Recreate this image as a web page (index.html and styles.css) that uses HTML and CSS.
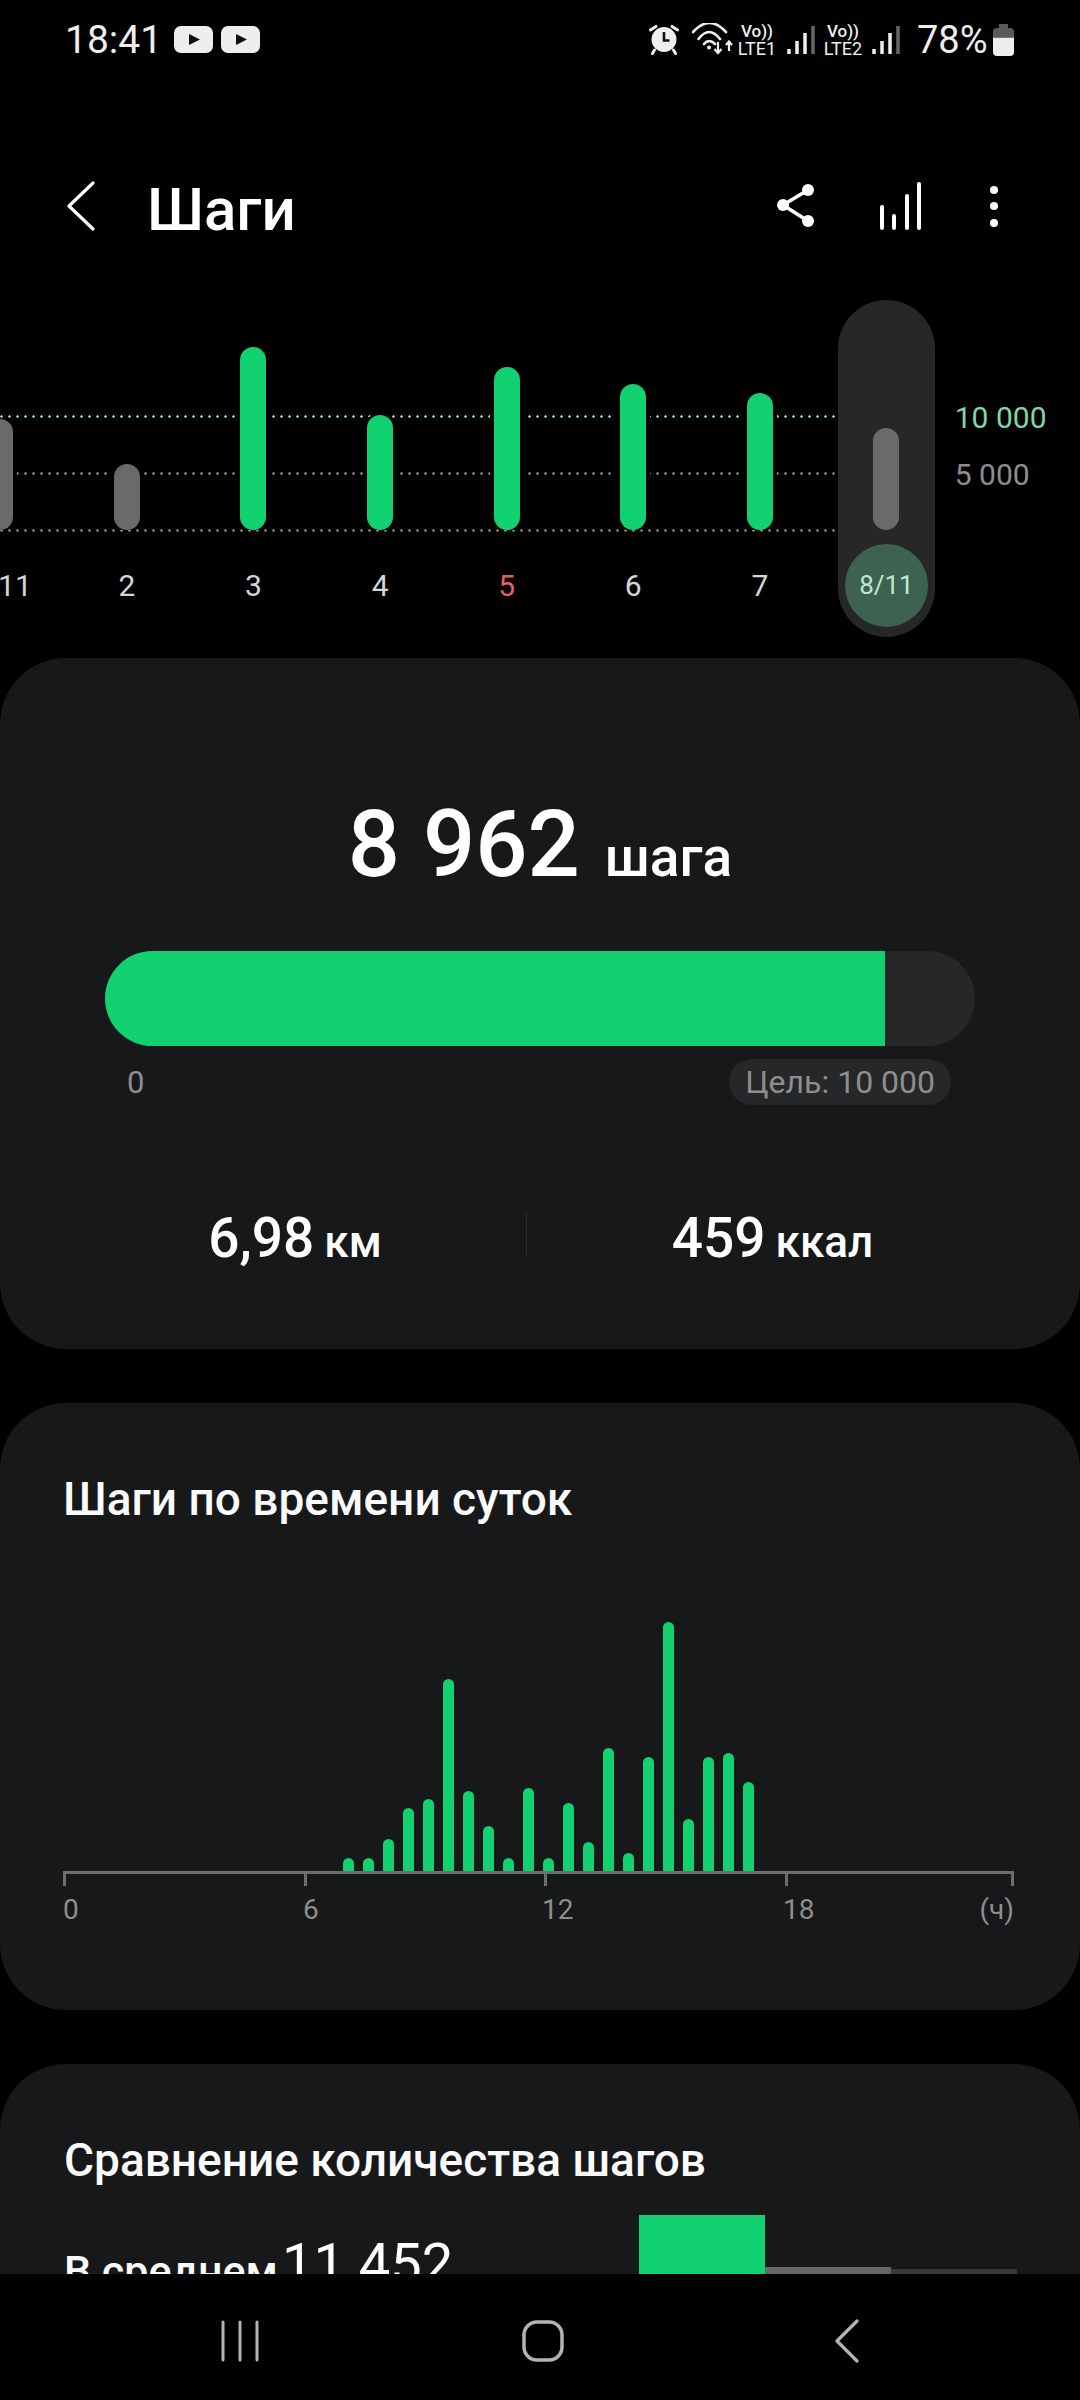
FILE: index.html
```html
<!DOCTYPE html>
<html lang="ru">
<head>
<meta charset="utf-8">
<title>Шаги</title>
<link rel="stylesheet" href="styles.css">
</head>
<body>
<div class="screen">
  <div class="status">
    <span class="time">18:41</span>
    <svg class="yt yt-first" viewBox="0 0 39 27"><rect width="39" height="27" rx="7" fill="#eee"/><path d="M15 8 26 13.5 15 19z" fill="#111"/></svg>
    <svg class="yt yt-second" viewBox="0 0 39 27"><rect width="39" height="27" rx="7" fill="#eee"/><path d="M15 8 26 13.5 15 19z" fill="#111"/></svg>
    <svg class="alarm" viewBox="0 0 32 30"><circle cx="16" cy="14.5" r="12.5" fill="#eee"/><path d="M2.5 5 8 1.5M29.5 5 24 1.5M6.500 25 4.500 28.500M25.500 25 27.500 28.500" stroke="#eee" stroke-width="3" stroke-linecap="round"/><path d="M16 7V15.500H21.500" fill="none" stroke="#111" stroke-width="2.600"/></svg>
    <svg class="wifi" viewBox="0 0 44 32"><path d="M1 9Q17.500-9 34 9M6.500 16Q17 2 28 16M12 21Q17 15 23 21" fill="none" stroke="#eee" stroke-width="2.600" stroke-linecap="round"/><circle cx="17" cy="24.500" r="2" fill="#eee"/><path d="M26 19V29M22.500 26 26 30 29.500 26M37 28V19M34 22 37 18.500 40 22" fill="none" stroke="#eee" stroke-width="2.200"/></svg>
    <div class="volte"><span class="vo">Vo))</span><span class="lte">LTE1</span></div>
    <svg class="signal" viewBox="0 0 28 30"><path d="M2 24V29M10 16V29M18 8V29" stroke="#eee" stroke-width="3.500"/><path d="M26 1V29" stroke="#666" stroke-width="3.500"/></svg>
    <div class="volte volte-two"><span class="vo">Vo))</span><span class="lte">LTE2</span></div>
    <svg class="signal signal-two" viewBox="0 0 28 30"><path d="M2 24V29M10 16V29M18 8V29" stroke="#eee" stroke-width="3.500"/><path d="M26 1V29" stroke="#666" stroke-width="3.500"/></svg>
    <span class="percent">78%</span>
    <svg class="battery" viewBox="0 0 21 32"><path d="M0 13V8A4 4 0 0 1 4 4H6V0H15V4H17A4 4 0 0 1 21 8V13z" fill="#5a5a5a"/><path d="M0 13.500H21V28A4 4 0 0 1 17 32H4A4 4 0 0 1 0 28z" fill="#eee"/></svg>
  </div>

  <div class="appbar">
    <svg class="back" viewBox="0 0 28 50"><path d="M26 2 2 25 26 48" fill="none" stroke="#fff" stroke-width="3.200" stroke-linecap="round" stroke-linejoin="round"/></svg>
    <h1 class="title">Шаги</h1>
    <svg class="share" viewBox="0 0 40 50"><path d="M32 9 7 24 32 40" fill="none" stroke="#fff" stroke-width="3.600"/><circle cx="32" cy="9" r="6" fill="#fff"/><circle cx="7" cy="24" r="6" fill="#fff"/><circle cx="32" cy="40" r="6" fill="#fff"/></svg>
    <svg class="bars-icon" viewBox="0 0 42 50"><path d="M2 26V47M14 35V47M27 15V47M39 3V47" stroke="#fff" stroke-width="4" stroke-linecap="round"/></svg>
    <svg class="kebab" viewBox="0 0 12 50"><circle cx="6" cy="9" r="4" fill="#fff"/><circle cx="6" cy="25" r="4" fill="#fff"/><circle cx="6" cy="42" r="4" fill="#fff"/></svg>
  </div>

  <div class="week">
    <div class="dots dots-goal"></div>
    <div class="dots dots-mid"></div>
    <div class="dots dots-base"></div>
    <div class="day"><div class="plot"><div class="bar bar-off" style="height:111px"></div></div><span class="day-label">1/11</span></div>
    <div class="day"><div class="plot"><div class="bar bar-off" style="height:66px"></div></div><span class="day-label">2</span></div>
    <div class="day"><div class="plot"><div class="bar" style="height:183px"></div></div><span class="day-label">3</span></div>
    <div class="day"><div class="plot"><div class="bar" style="height:115px"></div></div><span class="day-label">4</span></div>
    <div class="day"><div class="plot"><div class="bar" style="height:163px"></div></div><span class="day-label day-red">5</span></div>
    <div class="day"><div class="plot"><div class="bar" style="height:146px"></div></div><span class="day-label">6</span></div>
    <div class="day"><div class="plot"><div class="bar" style="height:137px"></div></div><span class="day-label">7</span></div>
    <div class="day day-selected"><div class="plot"><div class="bar bar-off" style="height:102px"></div></div><span class="day-circle">8/11</span></div>
    <div class="scale"><span class="scale-goal">10 000</span><span class="scale-mid">5 000</span></div>
  </div>

  <div class="main">
    <section class="card card-total">
      <div class="total"><span class="total-num">8 962</span> <span class="total-unit">шага</span></div>
      <div class="progress"><div class="progress-fill" style="width:89.650%"></div></div>
      <div class="legend"><span class="legend-zero">0</span><span class="legend-chip">Цель: 10 000</span></div>
      <div class="stats">
        <div class="stat"><span class="stat-num">6,98</span> <span class="stat-unit">км</span></div>
        <div class="stat-divider"></div>
        <div class="stat"><span class="stat-num">459</span> <span class="stat-unit">ккал</span></div>
      </div>
    </section>

    <section class="card card-hours">
      <h2 class="card-title">Шаги по времени суток</h2>
      <div class="hours">
        <div class="hour" style="height:13px"></div><div class="hour" style="height:13px"></div><div class="hour" style="height:32px"></div><div class="hour" style="height:63px"></div><div class="hour" style="height:72px"></div><div class="hour" style="height:192px"></div><div class="hour" style="height:80px"></div><div class="hour" style="height:45px"></div><div class="hour" style="height:13px"></div><div class="hour" style="height:83px"></div><div class="hour" style="height:13px"></div><div class="hour" style="height:68px"></div><div class="hour" style="height:29px"></div><div class="hour" style="height:123px"></div><div class="hour" style="height:18px"></div><div class="hour" style="height:114px"></div><div class="hour" style="height:249px"></div><div class="hour" style="height:52px"></div><div class="hour" style="height:114px"></div><div class="hour" style="height:118px"></div><div class="hour" style="height:89px"></div>
      </div>
      <div class="ticks"><i></i><i></i><i></i><i></i><i class="tick-end"></i></div>
      <div class="hour-labels"><span>0</span><span>6</span><span>12</span><span>18</span><span class="unit-h">(ч)</span></div>
    </section>

    <section class="card card-compare">
      <h2 class="card-title">Сравнение количества шагов</h2>
      <div class="compare">
        <span class="avg-label">В среднем</span>
        <span class="avg-num">11 452</span>
        <div class="compare-bars">
          <div class="cbar cbar-green"></div>
          <div class="cbar cbar-gray"></div>
          <div class="cbar cbar-dark"></div>
        </div>
      </div>
    </section>
  </div>

  <nav class="nav">
    <svg class="nav-recent" viewBox="0 0 40 42"><path d="M3 2V40M20 2V40M37 2V40" stroke="#b4b4b4" stroke-width="3" stroke-linecap="round"/></svg>
    <svg class="nav-home" viewBox="0 0 42 42"><rect x="2" y="2" width="38" height="38" rx="13" fill="none" stroke="#b4b4b4" stroke-width="3.500"/></svg>
    <svg class="nav-back" viewBox="0 0 24 44"><path d="M22 2 2 22 22 42" fill="none" stroke="#b4b4b4" stroke-width="3.200" stroke-linecap="round" stroke-linejoin="round"/></svg>
  </nav>
</div>
</body>
</html>
```

FILE: styles.css
```css
* { box-sizing: border-box; }
html, body { margin: 0; padding: 0; background: #000; }
body { width: 1080px; height: 2400px; overflow: hidden; font-family: Roboto, "Noto Sans", sans-serif; color: #fafafa; }

.screen { width: 1080px; height: 2400px; display: flex; flex-direction: column; overflow: hidden; }

/* status bar */
.status { height: 80px; flex: none; display: flex; align-items: center; padding-left: 65px; color: #eee; }
.time { font-size: 39px; line-height: 76px; width: 109px; }
.yt { width: 39px; height: 27px; flex: none; margin-top: -2px; }
.yt-second { margin-left: 8px; }
.alarm { width: 32px; height: 30px; margin-left: 388px; flex: none; }
.wifi { width: 44px; height: 32px; margin-left: 12px; flex: none; margin-top: -2px; }
.volte { width: 40px; margin-left: 1px; display: flex; flex-direction: column; align-items: center; flex: none; }
.vo { font-size: 17px; line-height: 17px; font-weight: 500; }
.lte { font-size: 18px; line-height: 16px; margin-top: 1px; }
.signal { width: 28px; height: 30px; margin-left: 10px; flex: none; }
.volte-two { margin-left: 8px; }
.signal-two { margin-left: 9px; }
.percent { font-size: 38px; line-height: 76px; margin-left: 17px; flex: none; }
.battery { width: 21px; height: 32px; margin-left: 5px; flex: none; }

/* app bar */
.appbar { height: 220px; flex: none; padding-top: 96px; display: flex; align-items: flex-start; padding-left: 67px; }
.back { width: 28px; height: 50px; margin-top: 5px; flex: none; }
.title { margin: 0 0 0 52px; font-size: 60px; line-height: 60px; font-weight: 500; padding-top: 4px; color: #fff; }
.share { width: 40px; height: 50px; margin-left: auto; margin-top: 5px; flex: none; }
.bars-icon { width: 42px; height: 50px; margin-left: 64px; margin-top: 5px; flex: none; }
.kebab { width: 12px; height: 50px; margin-left: 66px; margin-right: 80px; margin-top: 5px; flex: none; }

/* week chart */
.week { position: relative; height: 337px; flex: none; display: flex; margin-left: -63px; width: 1143px; }
.dots { position: absolute; left: 63px; width: 837px; height: 3px; background-size: 8px 3px; background-repeat: repeat-x; }
.dots-goal { top: 115px; background-image: radial-gradient(circle at 1.500px 1.500px, #86d8aa 1px, transparent 1.500px); }
.dots-mid { top: 172px; background-image: radial-gradient(circle at 1.500px 1.500px, #858585 1px, transparent 1.500px); }
.dots-base { top: 229px; background-image: radial-gradient(circle at 1.500px 1.500px, #858585 1px, transparent 1.500px); }
.day { width: 126.600px; flex: none; display: flex; flex-direction: column; align-items: center; position: relative; }
.plot { height: 230px; display: flex; align-items: flex-end; }
.bar { width: 26px; border-radius: 13px; background: #12d170; box-shadow: 4px 0 0 #000, -4px 0 0 #000; }
.bar-off { background: #6a6a6a; }
.day-label { margin-top: 36px; font-size: 30px; line-height: 40px; color: #d6d6d6; }
.day-red { color: #e8605a; }
.day-selected { width: 97px; margin: 0 14.800px; background: #262729; border-radius: 48.500px; }
.day-selected .bar { box-shadow: none; }
.day-circle { margin-top: 14px; width: 83px; height: 83px; border-radius: 50%; background: #3d6350; color: #bfe8d2; font-size: 26px; line-height: 83px; text-align: center; }
.scale { margin-left: 5px; padding-top: 89px; display: flex; flex-direction: column; font-size: 30px; line-height: 57px; flex: none; }
.scale-goal { color: #7fd8a4; }
.scale-mid { color: #8e8e8e; }

/* scroll area */
.main { margin-top: 21px; flex: 1; min-height: 0; overflow: hidden; display: flex; flex-direction: column; gap: 54px; }
.card { background: #17181a; border-radius: 66px; flex: none; }

/* total card */
.card-total { height: 691px; padding-top: 137px; }
.total { display: flex; justify-content: center; align-items: baseline; gap: 25px; line-height: 100px; height: 100px; }
.total-num { font-size: 92px; font-weight: 500; color: #fff; }
.total-unit { font-size: 55px; font-weight: 500; color: #fff; }
.progress { margin: 56px 105px 0; height: 95px; border-radius: 48px; background: #262729; overflow: hidden; }
.progress-fill { height: 95px; background: #12d170; }
.legend { margin: 13px 129px 0 127px; height: 46px; display: flex; justify-content: space-between; align-items: center; }
.legend-zero { font-size: 31px; color: #8e8e8e; }
.legend-chip { height: 46px; line-height: 46px; padding: 0 16px; border-radius: 23px; background: #262729; font-size: 32px; color: #8e8e8e; }
.stats { margin-top: 103px; padding: 0 62px 0 64px; display: grid; grid-template-columns: 462px 1px 1fr; align-items: start; }
.stat { text-align: center; line-height: 60px; height: 60px; }
.stat-num { font-size: 55px; font-weight: 500; color: #fff; }
.stat-unit { font-size: 44px; font-weight: 500; color: #fff; margin-left: 6px; }
.stat-divider { height: 44px; margin-top: 5px; background: #2c2d2f; }

/* cards with charts */
.card-title { margin: 0; font-size: 46px; line-height: 50px; font-weight: 500; color: #fafafa; }
.card-hours { height: 607px; padding: 71px 66px 0 63px; }
.hours { margin-top: 87px; height: 260px; padding-left: 280px; display: flex; align-items: flex-end; gap: 9px; }
.hour { width: 11px; background: #12d170; border-radius: 5.500px 5.500px 0 0; flex: none; }
.ticks { border-top: 3px solid #6e6e6e; display: grid; grid-template-columns: 241px 240px 241px 1fr 3px; height: 14px; }
.ticks i { width: 3px; height: 12px; background: #6e6e6e; }
.hour-labels { margin-top: 8px; display: grid; grid-template-columns: 240px 239px 241px 1fr auto; font-size: 28px; line-height: 34px; color: #8e8e8e; }

.card-compare { height: 400px; padding: 71px 63px 0 64px; }
.compare { margin-top: 30px; display: flex; align-items: flex-start; }
.avg-label { margin-top: 32px; font-size: 43px; line-height: 48px; font-weight: 500; width: 218px; white-space: nowrap; flex: none; }
.avg-num { margin-top: 16px; font-size: 56px; line-height: 66px; font-weight: 400; white-space: nowrap; color: #fff; flex: none; }
.compare-bars { margin-left: auto; display: flex; align-items: flex-end; height: 160px; }
.cbar { width: 126px; flex: none; }
.cbar-green { height: 160px; background: #12d170; }
.cbar-gray { height: 108px; background: #666; }
.cbar-dark { height: 106px; background: #3a3a3c; }

/* nav */
.nav { height: 126px; flex: none; background: #000; display: flex; align-items: center; padding: 8px 0 0 220px; }
.nav-recent { width: 40px; height: 42px; flex: none; }
.nav-home { width: 42px; height: 42px; margin-left: 262px; flex: none; }
.nav-back { width: 24px; height: 44px; margin-left: 271px; flex: none; }
```
